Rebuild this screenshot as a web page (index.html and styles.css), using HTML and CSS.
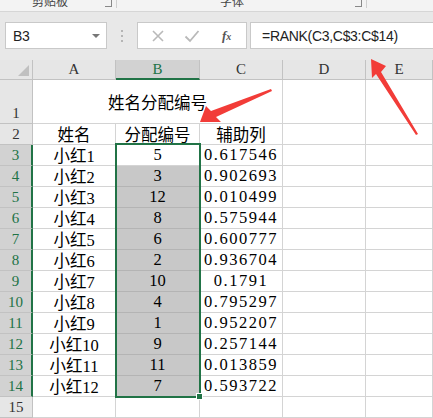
FILE: index.html
```html
<!DOCTYPE html>
<html lang="zh-CN">
<head>
    <meta charset="UTF-8">
    <title>RANK 分配编号</title>
    <link rel="stylesheet" href="styles.css">
</head>
<body>
    <div class="ribbon">
        <div class="group clip"><span class="glabel">剪贴板</span><span class="launcher"></span></div>
        <div class="group font"><span class="glabel">字体</span><span class="launcher"></span></div>
    </div>

    <div class="fbar">
        <div class="namebox">B3<span class="caret"></span></div>
        <div class="dots"><i></i><i></i><i></i></div>
        <div class="fnbox">
            <svg class="ico" width="14" height="14" viewBox="0 0 14 14"><path d="M2 2 L12 12 M12 2 L2 12" stroke="#b9b9b9" stroke-width="1.6" fill="none"/></svg>
            <svg class="ico" width="16" height="14" viewBox="0 0 16 14"><path d="M1.5 7.5 L6 12 L14.5 2" stroke="#b9b9b9" stroke-width="1.8" fill="none"/></svg>
            <span class="fx">f<span class="x">x</span></span>
        </div>
        <div class="formula">=RANK(C3,C$3:C$14)</div>
    </div>

    <div class="sheet">
        <div class="c h corner"></div>
        <div class="c h">A</div>
        <div class="c h on col">B</div>
        <div class="c h">C</div>
        <div class="c h">D</div>
        <div class="c h">E</div>

        <div class="c h rn low">1</div>
        <div class="c title">姓名分配编号</div>
        <div class="c"></div>
        <div class="c"></div>

        <div class="c h rn">2</div>
        <div class="c">姓名</div>
        <div class="c">分配编号</div>
        <div class="c">辅助列</div>
        <div class="c"></div>
        <div class="c"></div>

        <div class="c h rn on">3</div><div class="c">小红1</div><div class="c">5</div><div class="c num">0.617546</div><div class="c"></div><div class="c"></div>
        <div class="c h rn on">4</div><div class="c">小红2</div><div class="c sel">3</div><div class="c num">0.902693</div><div class="c"></div><div class="c"></div>
        <div class="c h rn on">5</div><div class="c">小红3</div><div class="c sel">12</div><div class="c num">0.010499</div><div class="c"></div><div class="c"></div>
        <div class="c h rn on">6</div><div class="c">小红4</div><div class="c sel">8</div><div class="c num">0.575944</div><div class="c"></div><div class="c"></div>
        <div class="c h rn on">7</div><div class="c">小红5</div><div class="c sel">6</div><div class="c num">0.600777</div><div class="c"></div><div class="c"></div>
        <div class="c h rn on">8</div><div class="c">小红6</div><div class="c sel">2</div><div class="c num">0.936704</div><div class="c"></div><div class="c"></div>
        <div class="c h rn on">9</div><div class="c">小红7</div><div class="c sel">10</div><div class="c num">0.1791</div><div class="c"></div><div class="c"></div>
        <div class="c h rn on">10</div><div class="c">小红8</div><div class="c sel">4</div><div class="c num">0.795297</div><div class="c"></div><div class="c"></div>
        <div class="c h rn on">11</div><div class="c">小红9</div><div class="c sel">1</div><div class="c num">0.952207</div><div class="c"></div><div class="c"></div>
        <div class="c h rn on">12</div><div class="c">小红10</div><div class="c sel">9</div><div class="c num">0.257144</div><div class="c"></div><div class="c"></div>
        <div class="c h rn on">13</div><div class="c">小红11</div><div class="c sel">11</div><div class="c num">0.013859</div><div class="c"></div><div class="c"></div>
        <div class="c h rn on">14</div><div class="c">小红12</div><div class="c sel">7</div><div class="c num">0.593722</div><div class="c"></div><div class="c"></div>
        <div class="c h rn">15</div><div class="c"></div><div class="c"></div><div class="c"></div><div class="c"></div><div class="c"></div>

        <div class="selection"></div>
        <div class="handle"></div>
    </div>

    <!-- annotation arrows -->
    <svg class="arrows" width="433" height="418" viewBox="0 0 433 418">
        <polygon points="200,122 206,106 211,111 271,89 272,91 216,117 221,122" fill="#f23c38"/>
        <polygon points="371,59 386,66 381,72 418,134 416,135 376,74 372,78" fill="#f23c38"/>
    </svg>
</body>
</html>
```

FILE: styles.css
```css
body {
    margin: 0;
    width: 433px;
    height: 418px;
    overflow: hidden;
    position: relative;
    background: #fff;
    font-family: "Liberation Sans", "Noto Sans CJK SC", sans-serif;
}
.ribbon {
    height: 11px;
    display: flex;
    background: #f3f3f3;
    border-bottom: 1px solid #d6d6d6;
    overflow: hidden;
}
.group {
    display: flex;
    height: 8px;
    border-right: 1px solid #d0d0d0;
}
.group.clip {
    width: 116px;
}
.group.font {
    width: 249px;
}
.glabel {
    font-family: "Noto Sans CJK SC", sans-serif;
    font-size: 12px;
    line-height: 12px;
    color: #444;
    margin-top: -5px;
}
.clip .glabel {
    margin-left: 32px;
}
.font .glabel {
    margin-left: 103px;
}
.launcher {
    margin-left: auto;
    margin-right: 4px;
    width: 6px;
    height: 6px;
    border-right: 1px solid #888;
    border-bottom: 1px solid #888;
}
.fbar {
    height: 48px;
    background: #e8e8e8;
    display: flex;
    align-items: flex-start;
    padding-top: 10px;
    box-sizing: border-box;
}
.namebox {
    width: 102px;
    height: 27px;
    margin-left: 5px;
    background: #fff;
    border: 1px solid #c9c9c9;
    box-sizing: border-box;
    display: flex;
    align-items: center;
    padding-left: 7px;
    font-size: 14px;
    color: #222;
    letter-spacing: -0.3px;
}
.caret {
    margin-left: auto;
    margin-right: 6px;
    border-left: 4px solid transparent;
    border-right: 4px solid transparent;
    border-top: 4px solid #777;
}
.dots {
    width: 30px;
    height: 27px;
    display: flex;
    flex-direction: column;
    align-items: center;
    justify-content: center;
    gap: 3px;
}
.dots i {
    width: 2px;
    height: 2px;
    background: #b5b5b5;
}
.fnbox {
    width: 110px;
    height: 27px;
    background: #fff;
    border: 1px solid #c9c9c9;
    box-sizing: border-box;
    display: flex;
    align-items: center;
    padding-left: 13px;
    gap: 19px;
}
.fx {
    font-family: "Liberation Serif", serif;
    font-style: italic;
    font-weight: bold;
    font-size: 13px;
    color: #555;
    margin-left: 3px;
}
.fx .x {
    font-size: 10px;
}
.formula {
    flex: 1;
    height: 27px;
    margin-left: 3px;
    background: #fff;
    border: 1px solid #c9c9c9;
    border-right: none;
    box-sizing: border-box;
    display: flex;
    align-items: center;
    padding-left: 11px;
    font-size: 14px;
    letter-spacing: -0.3px;
    color: #222;
}
.sheet {
    position: relative;
    display: grid;
    grid-template-columns: 33px 83px 84px 83px 83px 1fr;
    grid-template-rows: 20px 44px;
    grid-auto-rows: 21px;
    font-family: "Liberation Serif", "Noto Sans CJK SC", serif;
    font-size: 16.5px;
    color: #000;
}
.c {
    box-sizing: border-box;
    border-right: 1px solid #d4d4d4;
    border-bottom: 1px solid #d4d4d4;
    display: flex;
    align-items: center;
    justify-content: center;
    white-space: nowrap;
    overflow: hidden;
}
.num {
    letter-spacing: 1.5px;
}
.h {
    background: #e6e6e6;
    border-color: #c2c2c2;
    font-size: 15px;
    color: #333;
}
.h.on {
    background: #d2d2d2;
    color: #217346;
}
.h.col {
    border-bottom: 2px solid #217346;
}
.h.rn.on {
    border-right: 2px solid #217346;
}
.low {
    align-items: flex-end;
    padding-bottom: 1px;
}
.corner {
    position: relative;
}
.corner::after {
    content: "";
    position: absolute;
    right: 3px;
    bottom: 3px;
    border-left: 11px solid transparent;
    border-bottom: 11px solid #c0c0c0;
}
.title {
    grid-column: span 3;
}
.sel {
    background: #c8c8c8;
    border-bottom-color: #b4b4b4;
}
.selection {
    position: absolute;
    left: 115px;
    top: 83px;
    width: 86px;
    height: 255px;
    border: 2px solid #217346;
    box-sizing: border-box;
    pointer-events: none;
}
.handle {
    position: absolute;
    left: 196px;
    top: 333px;
    width: 5px;
    height: 5px;
    background: #217346;
    border: 1px solid #fff;
}
.arrows {
    position: absolute;
    left: 0;
    top: 0;
    pointer-events: none;
}
```
